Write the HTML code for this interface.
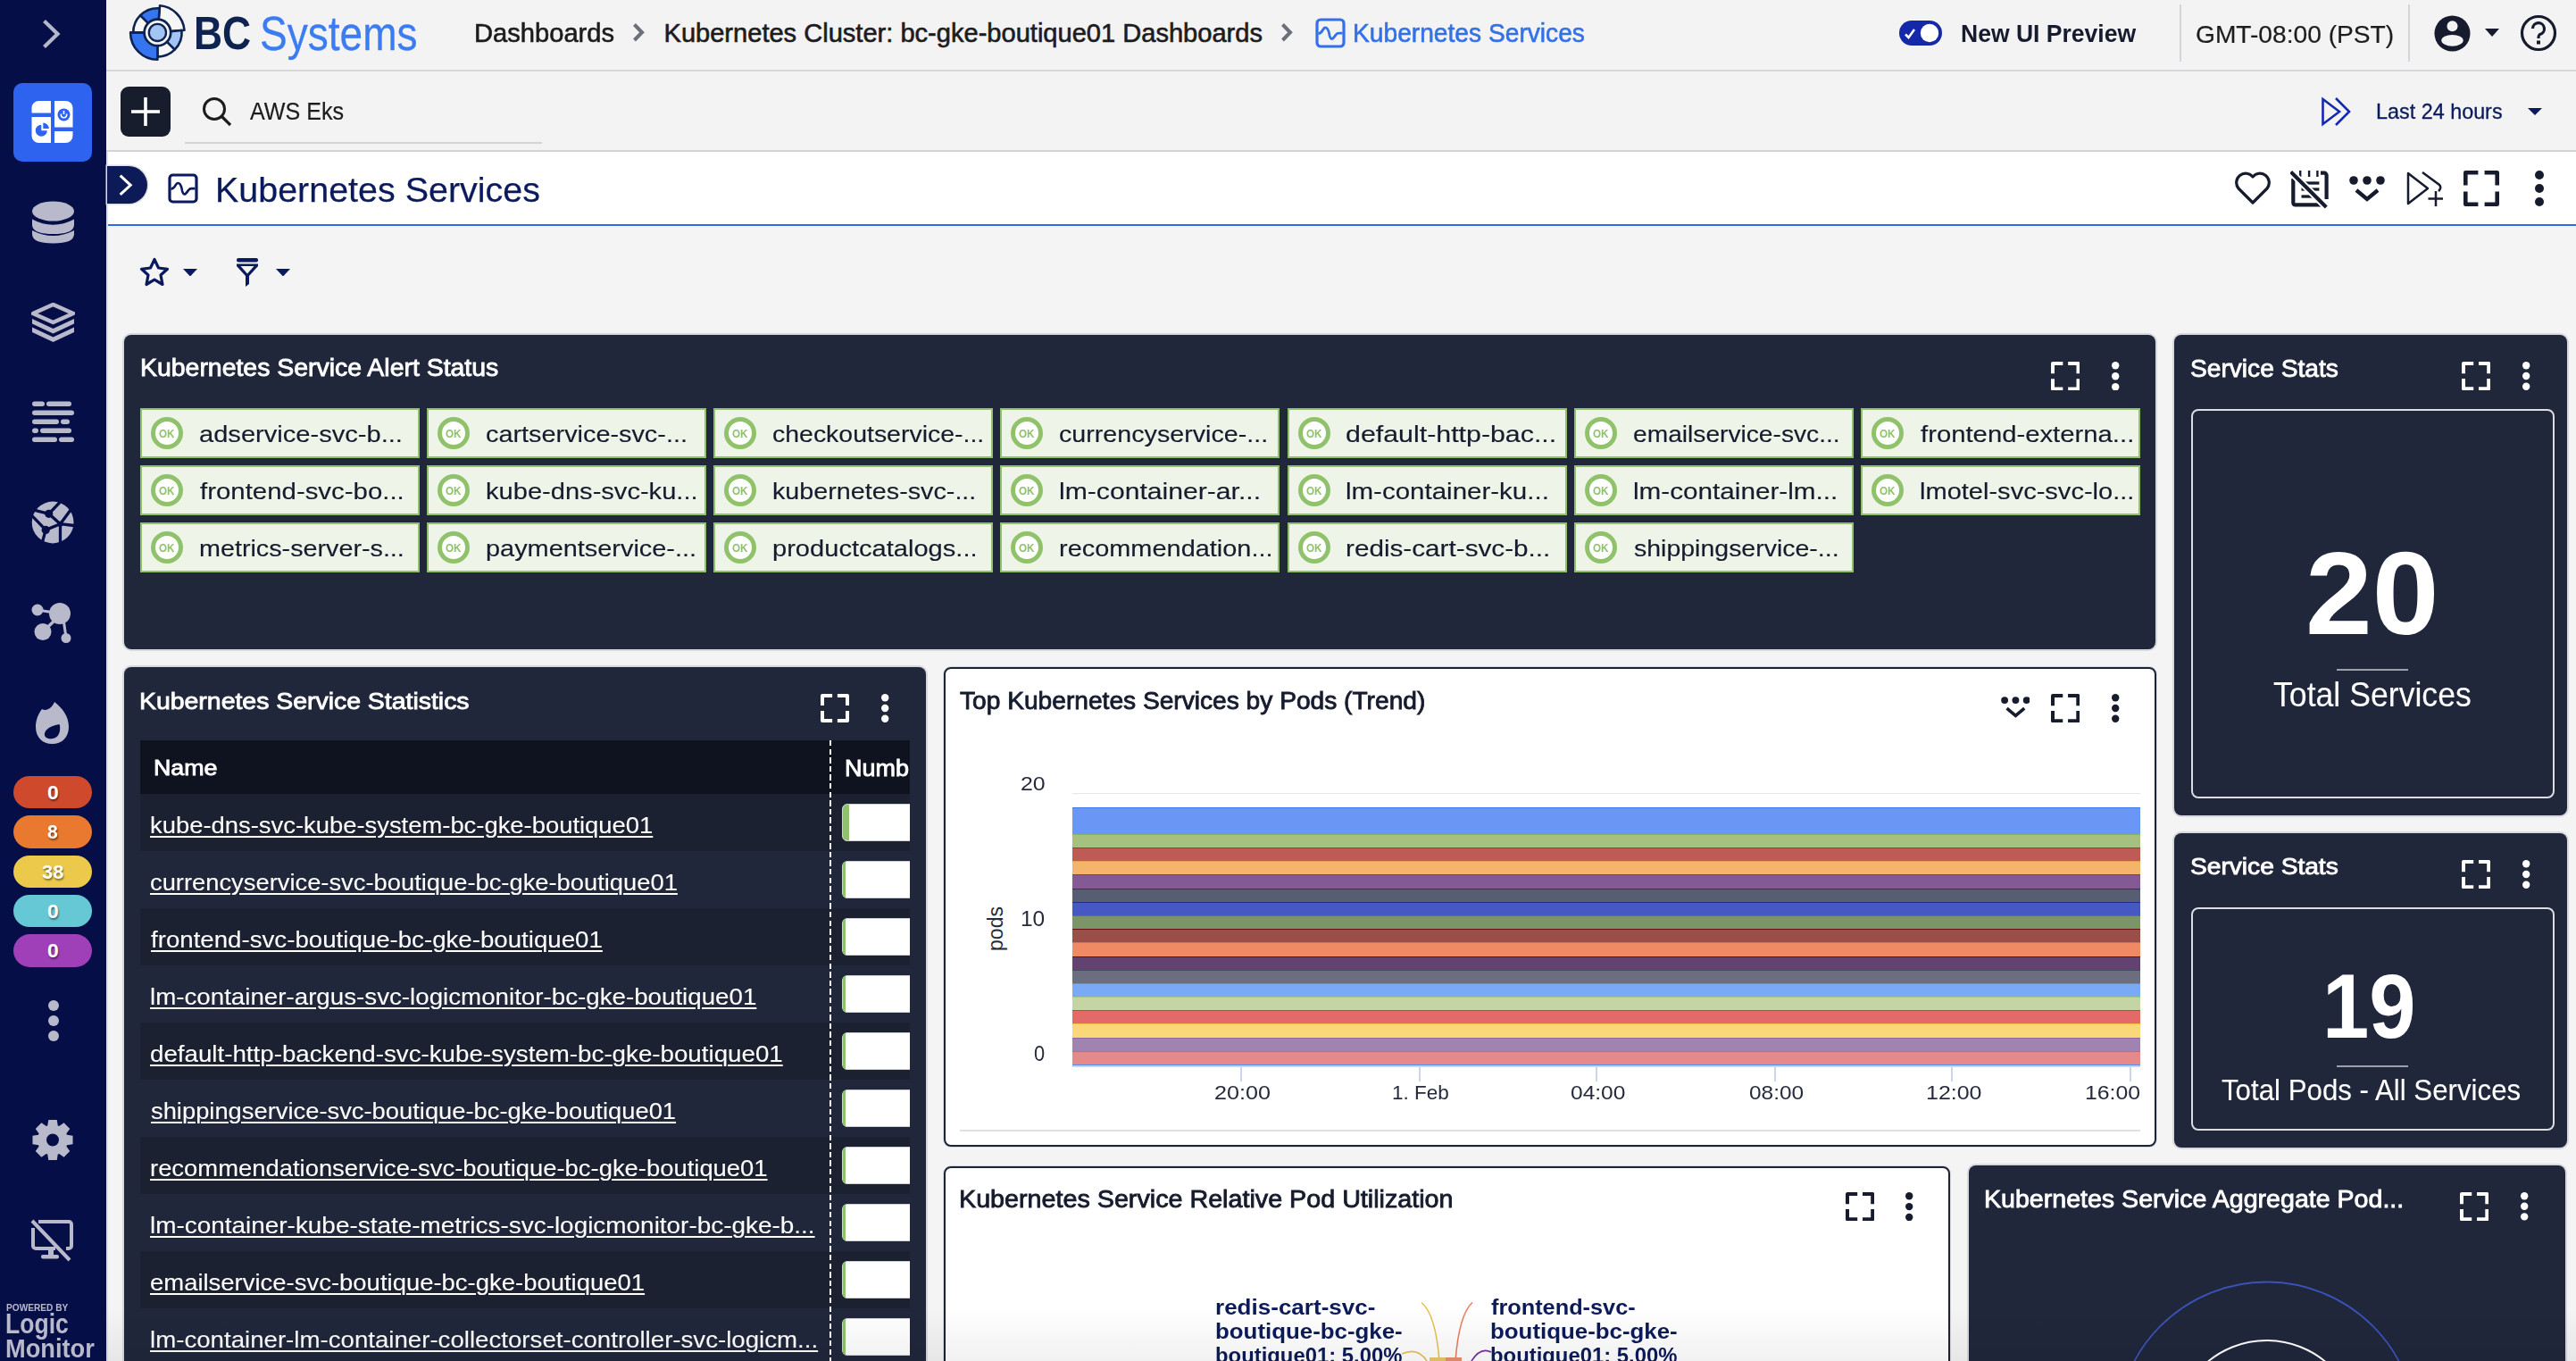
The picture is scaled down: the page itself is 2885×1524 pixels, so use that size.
<!DOCTYPE html><html><head><meta charset="utf-8"><style>
*{margin:0;padding:0;}
html,body{width:2885px;height:1524px;overflow:hidden;background:#f4f4f4;}
body{font-family:"Liberation Sans", sans-serif;position:relative;}
.b{position:absolute;display:block;}
.t{position:absolute;white-space:nowrap;line-height:1;transform-origin:0 0;}
</style></head><body><div class="b" style="left:0.00px;top:0.00px;width:119.00px;height:1524.00px;background:#060e47;"></div>
<svg class="b" style="left:0.00px;top:0.00px;" width="119" height="80" viewBox="0 0 119 80"><polyline points="49.5,23.5 64.5,38 49.5,52.5" fill="none" stroke="#b4b7c8" stroke-width="4.2"/></svg>
<div class="b" style="left:15.00px;top:93.00px;width:88.00px;height:88.00px;background:#2e63f0;border-radius:10px;"></div>
<svg class="b" style="left:35.00px;top:113.00px;" width="48" height="48" viewBox="0 0 48 48"><path d="M8.5 0 H22 V13.5 H0.5 V8 A8 8 0 0 1 8.5 0Z" fill="#fff"/><path d="M0.5 18 H22 V47 H8.5 A8 8 0 0 1 0.5 39Z" fill="#fff"/><path d="M26 0 H38.5 A8 8 0 0 1 46.5 8 V29.5 H26Z" fill="#fff"/><path d="M26 34 H46.5 V39 A8 8 0 0 1 38.5 47 H26Z" fill="#fff"/><circle cx="36.5" cy="15.5" r="7" fill="#2e63f0"/><path d="M33.5 14.5 A3.2 3.2 0 1 0 39.5 14.5" fill="none" stroke="#fff" stroke-width="1.6"/><line x1="36.5" y1="11" x2="36.5" y2="15" stroke="#fff" stroke-width="1.6"/><path d="M11.3 26.7 A6.5 6.5 0 1 0 17.8 33.2 H11.3Z" fill="#2e63f0"/><path d="M13.3 24.5 A6.5 6.5 0 0 1 19.8 31 H13.3Z" fill="#2e63f0"/></svg>
<svg class="b" style="left:35.00px;top:224.00px;" width="49" height="50" viewBox="0 0 49 50"><ellipse cx="24.5" cy="12.5" rx="23.5" ry="11" fill="#b8bacb"/><path d="M1 21.5 Q24.5 34 48 21.5 V27.5 Q48 38 24.5 38 Q1 38 1 27.5Z" fill="#b8bacb"/><path d="M1 34 Q24.5 46 48 34 V38 Q48 48.5 24.5 48.5 Q1 48.5 1 38Z" fill="#b8bacb"/></svg>
<svg class="b" style="left:35.00px;top:339.00px;" width="49" height="45" viewBox="0 0 49 45"><path d="M24.5 2 L47 12 L24.5 22 L2 12Z" fill="none" stroke="#b8bacb" stroke-width="4.5" stroke-linejoin="round"/><path d="M1 18 L24.5 29 L48 18 V23.5 L24.5 34.5 L1 23.5Z" fill="#b8bacb"/><path d="M1 27.5 L24.5 38.5 L48 27.5 V33 L24.5 44 L1 33Z" fill="#b8bacb"/></svg>
<svg class="b" style="left:35.00px;top:448.00px;" width="49" height="50" viewBox="0 0 49 50"><rect x="1" y="1.5" width="14" height="5.5" rx="2.75" fill="#b8bacb"/><rect x="17" y="1.5" width="28" height="5.5" rx="2.75" fill="#b8bacb"/><rect x="1" y="11.5" width="47" height="5.5" rx="2.75" fill="#b8bacb"/><rect x="1" y="21.5" width="30" height="5.5" rx="2.75" fill="#b8bacb"/><rect x="33" y="21.5" width="10" height="5.5" rx="2.75" fill="#b8bacb"/><rect x="1" y="31.5" width="7" height="5.5" rx="2.75" fill="#b8bacb"/><rect x="10" y="31.5" width="35" height="5.5" rx="2.75" fill="#b8bacb"/><rect x="1" y="41.5" width="28" height="5.5" rx="2.75" fill="#b8bacb"/><rect x="31" y="41.5" width="17" height="5.5" rx="2.75" fill="#b8bacb"/></svg>
<svg class="b" style="left:35.00px;top:561.00px;" width="49" height="49" viewBox="0 0 49 49"><defs><mask id="gm"><rect width="49" height="49" fill="#fff"/><path d="M19.7 14.3 L32 1.5 M19.7 14.3 L2 9.9 M19.7 14.3 L32.5 25.7 L43.9 10.3 M32.5 25.7 L47.9 27.5 M32.5 25.7 L32.5 47.5 M16.2 32.4 L32.5 25.7 M16.2 32.4 L1.2 16.9 M16.2 32.4 L12.6 45.5" fill="none" stroke="#000" stroke-width="3.3"/><circle cx="19.7" cy="14.3" r="4.6" fill="#000"/><circle cx="32.5" cy="25.7" r="3" fill="#000"/><circle cx="16.2" cy="32.4" r="4.6" fill="#000"/></mask></defs><circle cx="24.1" cy="24" r="23.4" fill="#b8bacb" mask="url(#gm)"/></svg>
<svg class="b" style="left:35.00px;top:673.00px;" width="49" height="49" viewBox="0 0 49 49"><circle cx="32" cy="14" r="12" fill="#b8bacb"/><circle cx="7" cy="10" r="6.5" fill="#b8bacb"/><circle cx="13" cy="34.5" r="9.5" fill="#b8bacb"/><circle cx="39" cy="41.5" r="5.5" fill="#b8bacb"/><line x1="7" y1="10" x2="32" y2="14" stroke="#b8bacb" stroke-width="3"/><line x1="13" y1="34.5" x2="30" y2="18" stroke="#b8bacb" stroke-width="3.5"/><line x1="36" y1="20" x2="39" y2="41" stroke="#b8bacb" stroke-width="3"/></svg>
<svg class="b" style="left:38.00px;top:785.00px;" width="42" height="50" viewBox="0 0 42 50"><path fill-rule="evenodd" fill="#b8bacb" d="M23 1 C20 8 14 12 9 9 C4 16 2 22 2 29 C2 41 10 48 20.5 48 C31 48 39 41 39 29 C39 17 32 8 23 1Z M28 26 C24 27 14 29 12 36 C11 41 16 43 21 42 C27 41 30 36 29 27Z"/></svg>
<div class="b" style="left:15.00px;top:869.00px;width:88.00px;height:36.00px;background:#cf4a2c;border-radius:19px;"></div>
<div class="t" style="left:53.00px;top:876.09px;font-size:22.923px;color:#fff;font-weight:bold;text-shadow:1px 2px 2px rgba(0,0,0,0.45);">0</div>
<div class="b" style="left:15.00px;top:913.00px;width:88.00px;height:37.00px;background:#e8792f;border-radius:19px;"></div>
<div class="t" style="left:53.00px;top:920.09px;font-size:22.923px;color:#fff;font-weight:bold;transform:scaleX(0.9231);text-shadow:1px 2px 2px rgba(0,0,0,0.45);">8</div>
<div class="b" style="left:15.00px;top:958.00px;width:88.00px;height:36.00px;background:#ecc94b;border-radius:19px;"></div>
<div class="t" style="left:46.75px;top:965.09px;font-size:22.923px;color:#fff;font-weight:bold;transform:scaleX(0.9518);text-shadow:1px 2px 2px rgba(0,0,0,0.45);">38</div>
<div class="b" style="left:15.00px;top:1002.00px;width:88.00px;height:36.00px;background:#66c8d4;border-radius:19px;"></div>
<div class="t" style="left:53.00px;top:1009.09px;font-size:22.923px;color:#fff;font-weight:bold;text-shadow:1px 2px 2px rgba(0,0,0,0.45);">0</div>
<div class="b" style="left:15.00px;top:1046.00px;width:88.00px;height:37.00px;background:#a040b8;border-radius:19px;"></div>
<div class="t" style="left:53.00px;top:1053.09px;font-size:22.923px;color:#fff;font-weight:bold;text-shadow:1px 2px 2px rgba(0,0,0,0.45);">0</div>
<svg class="b" style="left:50.00px;top:1115.00px;" width="20" height="55" viewBox="0 0 20 55"><circle cx="10" cy="11" r="6" fill="#b8bacb"/><circle cx="10" cy="28" r="6" fill="#b8bacb"/><circle cx="10" cy="45" r="6" fill="#b8bacb"/></svg>
<svg class="b" style="left:35.00px;top:1252.00px;" width="49" height="49" viewBox="0 0 49 49"><path fill-rule="evenodd" fill="#b8bacb" d="M39.99 18.74 L46.51 19.77 L46.51 29.23 L39.99 30.26 L39.38 31.74 L43.26 37.07 L36.57 43.76 L31.24 39.88 L29.76 40.49 L28.73 47.01 L19.27 47.01 L18.24 40.49 L16.76 39.88 L11.43 43.76 L4.74 37.07 L8.62 31.74 L8.01 30.26 L1.49 29.23 L1.49 19.77 L8.01 18.74 L8.62 17.26 L4.74 11.93 L11.43 5.24 L16.76 9.12 L18.24 8.51 L19.27 1.99 L28.73 1.99 L29.76 8.51 L31.24 9.12 L36.57 5.24 L43.26 11.93 L39.38 17.26Z M31.00 24.50 A7 7 0 1 0 17.00 24.50 A7 7 0 1 0 31.00 24.50 Z"/></svg>
<svg class="b" style="left:33.00px;top:1365.00px;" width="49" height="49" viewBox="0 0 49 49"><path d="M10 3 H44 A3 3 0 0 1 47 6 V30 A3 3 0 0 1 44 33 H41" fill="none" stroke="#b8bacb" stroke-width="4"/><path d="M4 10 V30 A3 3 0 0 0 7 33 H29" fill="none" stroke="#b8bacb" stroke-width="4"/><rect x="21" y="33" width="6" height="8" fill="#b8bacb"/><rect x="13" y="40" width="20" height="4.5" rx="2" fill="#b8bacb"/><line x1="3" y1="2" x2="45" y2="46" stroke="#b8bacb" stroke-width="4"/></svg>
<div class="t" style="left:7.00px;top:1459.27px;font-size:10.901px;color:#b8bacb;font-weight:bold;transform:scaleX(0.9313);">POWERED BY</div>
<div class="t" style="left:5.56px;top:1466.92px;font-size:30.451px;color:#b8bacb;font-weight:bold;transform:scaleX(0.8721);">Logic</div>
<div class="t" style="left:5.81px;top:1495.48px;font-size:30.378px;color:#b8bacb;font-weight:bold;transform:scaleX(0.8971);">Monitor</div>
<div class="b" style="left:119.00px;top:0.00px;width:2766.00px;height:80.00px;background:#f3f3f4;border-bottom:2px solid #d8d8dc;box-sizing:border-box;"></div>
<svg class="b" style="left:143.30px;top:3.30px;" width="67" height="67" viewBox="0 0 67 67"><g stroke="#0e2350" stroke-width="2.6" stroke-linejoin="round"><path d="M36.03 3.31 A30.2 30.2 0 0 1 63.49 30.77 L48.14 32.11 A14.8 14.8 0 0 0 34.69 18.66 Z" fill="#f6f6f7"/><path d="M60.50 31.03 A27.2 27.2 0 0 1 52.63 52.63 L43.87 43.87 A14.8 14.8 0 0 0 48.14 32.11 Z" fill="#a3c5f3"/><path d="M52.63 52.63 A27.2 27.2 0 0 1 33.40 60.60 L33.40 48.20 A14.8 14.8 0 0 0 43.87 43.87 Z" fill="#f6f6f7"/><path d="M33.40 63.70 A30.3 30.3 0 0 1 3.10 33.40 L18.60 33.40 A14.8 14.8 0 0 0 33.40 48.20 Z" fill="#3575f0"/><path d="M6.20 33.40 A27.2 27.2 0 0 1 14.17 14.17 L22.93 22.93 A14.8 14.8 0 0 0 18.60 33.40 Z" fill="#f6f6f7"/><path d="M14.17 14.17 A27.2 27.2 0 0 1 35.77 6.30 L34.69 18.66 A14.8 14.8 0 0 0 22.93 22.93 Z" fill="#3575f0"/></g><circle cx="33.4" cy="33.4" r="14.6" fill="#f6f6f7" stroke="#0e2350" stroke-width="2.3"/><circle cx="33.4" cy="33.4" r="9.6" fill="#a3c5f3" stroke="#0e2350" stroke-width="2.3"/></svg>
<div class="t" style="left:217.45px;top:11.20px;font-size:52.326px;color:#0e2350;font-weight:bold;transform:scaleX(0.8498);">BC</div>
<div class="t" style="left:290.76px;top:10.58px;font-size:53.052px;color:#3b7cf0;transform:scaleX(0.8681);-webkit-text-stroke:0.30px #3b7cf0;">Systems</div>
<div class="t" style="left:530.50px;top:23.39px;font-size:29.070px;color:#1c1c1e;transform:scaleX(1.0021);-webkit-text-stroke:0.60px #1c1c1e;">Dashboards</div>
<svg class="b" style="left:708.00px;top:25.00px;" width="15" height="23" viewBox="0 0 15 23"><polyline points="2.5,2.5 11,11.25 2.5,20" fill="none" stroke="#6b6f7a" stroke-width="4"/></svg>
<div class="t" style="left:743.50px;top:23.39px;font-size:29.070px;color:#1c1c1e;-webkit-text-stroke:0.60px #1c1c1e;">Kubernetes Cluster: bc-gke-boutique01 Dashboards</div>
<svg class="b" style="left:1433.50px;top:25.00px;" width="15" height="23" viewBox="0 0 15 23"><polyline points="2.5,2.5 11,11.25 2.5,20" fill="none" stroke="#6b6f7a" stroke-width="4"/></svg>
<svg class="b" style="left:1473.00px;top:20.00px;" width="34" height="34" viewBox="0 0 34 34"><rect x="2" y="2" width="30" height="30" rx="4" fill="none" stroke="#3371e8" stroke-width="3.2"/><path d="M3.5 17.6 Q6.5 17.5 8.5 13.5 Q11 9 13.8 12.5 Q15.5 15 16 19.5 Q17 24.5 19.8 23 Q21.5 21.5 23 19 Q24.5 17.1 26.5 17.1 H30.5" fill="none" stroke="#3371e8" stroke-width="2.8"/></svg>
<div class="t" style="left:1515.06px;top:23.39px;font-size:29.070px;color:#3371e8;transform:scaleX(0.9694);-webkit-text-stroke:0.60px #3371e8;">Kubernetes Services</div>
<div class="b" style="left:2127.00px;top:23.00px;width:48.00px;height:28.00px;background:#1428a8;border-radius:14px;"></div>
<svg class="b" style="left:2127.00px;top:23.00px;" width="48" height="28" viewBox="0 0 48 28"><circle cx="34" cy="14" r="10.2" fill="#fff"/><polyline points="7,15.5 10.5,19 17,10" fill="none" stroke="#fff" stroke-width="2.5"/></svg>
<div class="t" style="left:2195.55px;top:24.33px;font-size:27.834px;color:#161b2e;font-weight:bold;transform:scaleX(0.9534);">New UI Preview</div>
<div class="b" style="left:2441.00px;top:5.00px;width:2.00px;height:64.00px;background:#d4d4da;"></div>
<div class="t" style="left:2458.97px;top:24.66px;font-size:27.326px;color:#1c1c1e;transform:scaleX(1.0308);-webkit-text-stroke:0.20px #1c1c1e;">GMT-08:00 (PST)</div>
<div class="b" style="left:2697.00px;top:5.00px;width:2.00px;height:64.00px;background:#d4d4da;"></div>
<svg class="b" style="left:2726.00px;top:17.00px;" width="41" height="41" viewBox="0 0 41 41"><defs><clipPath id="uc"><circle cx="20.5" cy="20.5" r="20"/></clipPath></defs><circle cx="20.5" cy="20.5" r="20" fill="#161b2e"/><circle cx="20.5" cy="12.2" r="6" fill="#f3f3f4"/><ellipse cx="20.5" cy="28.3" rx="12.2" ry="6.4" fill="#f3f3f4"/></svg>
<svg class="b" style="left:2783.00px;top:32.00px;" width="16" height="9" viewBox="0 0 16 9"><polygon points="0,0 16,0 8,9" fill="#161b2e"/></svg>
<svg class="b" style="left:2822.00px;top:16.00px;" width="42" height="42" viewBox="0 0 42 42"><circle cx="21" cy="21" r="18.5" fill="none" stroke="#161b2e" stroke-width="3.2"/><path d="M14.5 16 A6.5 6.5 0 1 1 22.5 22.5 Q21 23.5 21 26 V27" fill="none" stroke="#161b2e" stroke-width="3.2"/><rect x="19" y="29.5" width="4" height="4" fill="#161b2e"/></svg>
<div class="b" style="left:119.00px;top:80.00px;width:2766.00px;height:90.00px;background:#f3f3f4;border-bottom:2px solid #d4d4d8;box-sizing:border-box;"></div>
<div class="b" style="left:135.00px;top:97.00px;width:56.00px;height:56.00px;background:#181d2d;border-radius:9px;"></div>
<svg class="b" style="left:135.00px;top:97.00px;" width="56" height="56" viewBox="0 0 56 56"><line x1="12" y1="28" x2="44" y2="28" stroke="#fff" stroke-width="3.6"/><line x1="28" y1="12" x2="28" y2="44" stroke="#fff" stroke-width="3.6"/></svg>
<svg class="b" style="left:226.00px;top:108.00px;" width="34" height="34" viewBox="0 0 34 34"><circle cx="14" cy="14" r="11.5" fill="none" stroke="#1c1c1e" stroke-width="3"/><line x1="22.5" y1="22.5" x2="32" y2="32" stroke="#1c1c1e" stroke-width="3.2"/></svg>
<div class="t" style="left:279.50px;top:110.67px;font-size:27.253px;color:#1c1c1e;transform:scaleX(0.9213);-webkit-text-stroke:0.20px #1c1c1e;">AWS Eks</div>
<div class="b" style="left:207.00px;top:159.00px;width:400.00px;height:2.00px;background:#d2d2da;"></div>
<svg class="b" style="left:2599.00px;top:108.00px;" width="35" height="34" viewBox="0 0 35 34"><polygon points="2.5,3 21,17 2.5,31" fill="none" stroke="#1428b0" stroke-width="2.6" stroke-linejoin="miter"/><polyline points="17,2 32,17 17,32" fill="none" stroke="#1428b0" stroke-width="2.6"/></svg>
<div class="t" style="left:2660.54px;top:113.45px;font-size:24.273px;color:#0b1a5c;transform:scaleX(0.9629);-webkit-text-stroke:0.30px #0b1a5c;">Last 24 hours</div>
<svg class="b" style="left:2831.00px;top:121.00px;" width="16" height="8" viewBox="0 0 16 8"><polygon points="0,0 16,0 8,8" fill="#0b1a5c"/></svg>
<div class="b" style="left:119.00px;top:170.00px;width:2766.00px;height:83.00px;background:#fff;border-bottom:2.5px solid #2e6be6;box-sizing:border-box;"></div>
<div class="b" style="left:119.00px;top:170.00px;width:2.00px;height:1354.00px;background:#dde0e4;"></div>
<div class="b" style="left:120.00px;top:185.80px;width:44.50px;height:42.00px;background:#0c1a57;border-radius:0 21px 21px 0;box-shadow:0 0 0 1.5px #dcdde2;"></div>
<svg class="b" style="left:119.00px;top:185.00px;" width="46" height="43" viewBox="0 0 46 43"><polyline points="15.7,11.7 27.2,22.3 15.7,32.9" fill="none" stroke="#fff" stroke-width="3"/></svg>
<svg class="b" style="left:188.00px;top:194.00px;" width="34" height="34" viewBox="0 0 34 34"><rect x="2" y="2" width="30" height="30" rx="3.5" fill="none" stroke="#0b1a5c" stroke-width="3.2"/><path d="M3.5 17.6 Q6.5 17.5 8.5 13.5 Q11 9 13.8 12.5 Q15.5 15 16 19.5 Q17 24.5 19.8 23 Q21.5 21.5 23 19 Q24.5 17.1 26.5 17.1 H30.5" fill="none" stroke="#0b1a5c" stroke-width="2.6"/></svg>
<div class="t" style="left:240.73px;top:192.52px;font-size:39.244px;color:#0b1a5c;transform:scaleX(1.0052);-webkit-text-stroke:0.25px #0b1a5c;">Kubernetes Services</div>
<svg class="b" style="left:2502.00px;top:192.00px;" width="42" height="38" viewBox="0 0 42 38"><path d="M21 35 L5 19 A9.5 9.5 0 0 1 21 6 A9.5 9.5 0 0 1 37 19Z" fill="none" stroke="#161b2e" stroke-width="3.2" stroke-linejoin="round"/></svg>
<svg class="b" style="left:2565.00px;top:190.00px;" width="44" height="44" viewBox="0 0 44 44"><path d="M3.3 10 V37 A2.5 2.5 0 0 0 5.8 39.4 H36" fill="none" stroke="#161b2e" stroke-width="4.2"/><path d="M34 3.7 H38 A2.5 2.5 0 0 1 40.6 6.2 V33" fill="none" stroke="#161b2e" stroke-width="4.2"/><line x1="12.5" y1="15" x2="32.4" y2="15" stroke="#161b2e" stroke-width="3.3"/><line x1="12.5" y1="22" x2="32.4" y2="22" stroke="#161b2e" stroke-width="3.3"/><line x1="12.5" y1="30" x2="28" y2="30" stroke="#161b2e" stroke-width="3.3"/><line x1="11.2" y1="1" x2="11.2" y2="8" stroke="#161b2e" stroke-width="2.4"/><line x1="21.1" y1="1" x2="21.1" y2="8" stroke="#161b2e" stroke-width="2.4"/><line x1="30.4" y1="1" x2="30.4" y2="8" stroke="#161b2e" stroke-width="2.4"/><line x1="0.6" y1="2.4" x2="40.3" y2="42" stroke="#fff" stroke-width="8"/><line x1="0.6" y1="2.4" x2="40.3" y2="42" stroke="#161b2e" stroke-width="4.2"/></svg>
<svg class="b" style="left:2631.00px;top:197.00px;" width="40" height="30" viewBox="0 0 40 30"><g transform="scale(1)"><circle cx="5" cy="5" r="4.8" fill="#161b2e"/><circle cx="20" cy="5" r="4.8" fill="#161b2e"/><circle cx="35" cy="5" r="4.8" fill="#161b2e"/><polyline points="8,16 20,26 32,16" fill="none" stroke="#161b2e" stroke-width="4.4"/></g></svg>
<svg class="b" style="left:2694.00px;top:191.00px;" width="42" height="41" viewBox="0 0 42 41"><polygon points="3,3 25,20 3,37" fill="none" stroke="#161b2e" stroke-width="2.5" stroke-linejoin="round"/><path d="M19 2 L38 16 Q41 19 37 23" fill="none" stroke="#161b2e" stroke-width="2.5"/><line x1="34" y1="23" x2="34" y2="40" stroke="#161b2e" stroke-width="2.5"/><line x1="25.5" y1="31.5" x2="42" y2="31.5" stroke="#161b2e" stroke-width="2.5"/></svg>
<svg class="b" style="left:2759.00px;top:191.00px;" width="40" height="40" viewBox="0 0 40 40"><path d="M2.3 16.4 V2.3 H16.4 M23.6 2.3 H37.7 V16.4 M2.3 23.6 V37.7 H16.4 M23.6 37.7 H37.7 V23.6" fill="none" stroke="#161b2e" stroke-width="4.6" stroke-linejoin="round"/></svg>
<svg class="b" style="left:2838.00px;top:191.00px;" width="12" height="40" viewBox="0 0 12 40"><circle cx="6" cy="5" r="5" fill="#161b2e"/><circle cx="6" cy="20" r="5" fill="#161b2e"/><circle cx="6" cy="35" r="5" fill="#161b2e"/></svg>
<div class="b" style="left:121.00px;top:253.00px;width:2764.00px;height:1271.00px;background:#f4f4f4;"></div>
<svg class="b" style="left:156.00px;top:288.00px;" width="34" height="34" viewBox="0 0 34 34"><polygon points="17,2.5 21.5,12 31.5,13.3 24,20 26,30.5 17,25.2 8,30.5 10,20 2.5,13.3 12.5,12" fill="none" stroke="#0b1a5c" stroke-width="3.2" stroke-linejoin="round"/></svg>
<svg class="b" style="left:205.00px;top:300.50px;" width="16" height="8.5" viewBox="0 0 16 8.5"><polygon points="0,0 16,0 8,8.5" fill="#0b1a5c"/></svg>
<svg class="b" style="left:264.00px;top:288.00px;" width="26" height="34" viewBox="0 0 26 34"><rect x="1" y="1" width="24" height="4.5" rx="2" fill="#0b1a5c"/><path d="M1 7.5 H25 V10 L15 21 V30 L11 33 V21 L1 10Z" fill="#0b1a5c"/><path d="M5.5 10 H20.5 L13 18.5Z" fill="#f4f4f4"/></svg>
<svg class="b" style="left:309.00px;top:300.50px;" width="16" height="8.5" viewBox="0 0 16 8.5"><polygon points="0,0 16,0 8,8.5" fill="#0b1a5c"/></svg>
<div class="b" style="left:139.00px;top:375.00px;width:2275.00px;height:352.00px;background:#20273b;border-radius:8px;box-shadow:0 0 0 2px #d6d8dd;"></div>
<div class="t" style="left:156.64px;top:399.20px;font-size:26.926px;color:#fff;transform:scaleX(1.0563);-webkit-text-stroke:0.85px #fff;">Kubernetes Service Alert Status</div>
<svg class="b" style="left:2296.50px;top:404.50px;" width="32.5" height="32.5" viewBox="0 0 32.5 32.5"><path d="M2 13.325 V2 H13.325 M19.175 2 H30.5 V13.325 M2 19.175 V30.5 H13.325 M19.175 30.5 H30.5 V19.175" fill="none" stroke="#fff" stroke-width="4" stroke-linejoin="round"/></svg>
<svg class="b" style="left:2363.80px;top:404.50px;" width="10.4" height="32.5" viewBox="0 0 10.4 32.5"><circle cx="5.2" cy="4.2" r="4.2" fill="#fff"/><circle cx="5.2" cy="16.25" r="4.2" fill="#fff"/><circle cx="5.2" cy="28.3" r="4.2" fill="#fff"/></svg>
<div class="b" style="left:157.00px;top:457.00px;width:313.00px;height:56.00px;background:#eef4e8;border:2px solid #90c26c;box-sizing:border-box;"></div>
<svg class="b" style="left:169.00px;top:467.00px;" width="36" height="36" viewBox="0 0 36 36"><circle cx="18" cy="18" r="15.5" fill="#fff" stroke="#90c26c" stroke-width="5"/></svg>
<div class="t" style="left:178.00px;top:478.92px;font-size:13.081px;color:#90c26c;font-weight:bold;transform:scaleX(0.8923);">OK</div>
<div class="t" style="left:222.87px;top:473.64px;font-size:25.821px;color:#161c2e;transform:scaleX(1.1267);-webkit-text-stroke:0.15px #161c2e;">adservice-svc-b...</div>
<div class="b" style="left:478.13px;top:457.00px;width:313.00px;height:56.00px;background:#eef4e8;border:2px solid #90c26c;box-sizing:border-box;"></div>
<svg class="b" style="left:490.13px;top:467.00px;" width="36" height="36" viewBox="0 0 36 36"><circle cx="18" cy="18" r="15.5" fill="#fff" stroke="#90c26c" stroke-width="5"/></svg>
<div class="t" style="left:499.13px;top:478.92px;font-size:13.081px;color:#90c26c;font-weight:bold;transform:scaleX(0.8923);">OK</div>
<div class="t" style="left:544.01px;top:473.64px;font-size:25.821px;color:#161c2e;transform:scaleX(1.1173);-webkit-text-stroke:0.15px #161c2e;">cartservice-svc-...</div>
<div class="b" style="left:799.26px;top:457.00px;width:313.00px;height:56.00px;background:#eef4e8;border:2px solid #90c26c;box-sizing:border-box;"></div>
<svg class="b" style="left:811.26px;top:467.00px;" width="36" height="36" viewBox="0 0 36 36"><circle cx="18" cy="18" r="15.5" fill="#fff" stroke="#90c26c" stroke-width="5"/></svg>
<div class="t" style="left:820.26px;top:478.92px;font-size:13.081px;color:#90c26c;font-weight:bold;transform:scaleX(0.8923);">OK</div>
<div class="t" style="left:865.16px;top:473.64px;font-size:25.821px;color:#161c2e;transform:scaleX(1.1023);-webkit-text-stroke:0.15px #161c2e;">checkoutservice-...</div>
<div class="b" style="left:1120.39px;top:457.00px;width:313.00px;height:56.00px;background:#eef4e8;border:2px solid #90c26c;box-sizing:border-box;"></div>
<svg class="b" style="left:1132.39px;top:467.00px;" width="36" height="36" viewBox="0 0 36 36"><circle cx="18" cy="18" r="15.5" fill="#fff" stroke="#90c26c" stroke-width="5"/></svg>
<div class="t" style="left:1141.39px;top:478.92px;font-size:13.081px;color:#90c26c;font-weight:bold;transform:scaleX(0.8923);">OK</div>
<div class="t" style="left:1186.28px;top:473.64px;font-size:25.821px;color:#161c2e;transform:scaleX(1.1104);-webkit-text-stroke:0.15px #161c2e;">currencyservice-...</div>
<div class="b" style="left:1441.52px;top:457.00px;width:313.00px;height:56.00px;background:#eef4e8;border:2px solid #90c26c;box-sizing:border-box;"></div>
<svg class="b" style="left:1453.52px;top:467.00px;" width="36" height="36" viewBox="0 0 36 36"><circle cx="18" cy="18" r="15.5" fill="#fff" stroke="#90c26c" stroke-width="5"/></svg>
<div class="t" style="left:1462.52px;top:478.92px;font-size:13.081px;color:#90c26c;font-weight:bold;transform:scaleX(0.8923);">OK</div>
<div class="t" style="left:1507.34px;top:473.64px;font-size:25.821px;color:#161c2e;transform:scaleX(1.1760);-webkit-text-stroke:0.15px #161c2e;">default-http-bac...</div>
<div class="b" style="left:1762.65px;top:457.00px;width:313.00px;height:56.00px;background:#eef4e8;border:2px solid #90c26c;box-sizing:border-box;"></div>
<svg class="b" style="left:1774.65px;top:467.00px;" width="36" height="36" viewBox="0 0 36 36"><circle cx="18" cy="18" r="15.5" fill="#fff" stroke="#90c26c" stroke-width="5"/></svg>
<div class="t" style="left:1783.65px;top:478.92px;font-size:13.081px;color:#90c26c;font-weight:bold;transform:scaleX(0.8923);">OK</div>
<div class="t" style="left:1828.56px;top:473.64px;font-size:25.821px;color:#161c2e;transform:scaleX(1.0913);-webkit-text-stroke:0.15px #161c2e;">emailservice-svc...</div>
<div class="b" style="left:2083.78px;top:457.00px;width:313.00px;height:56.00px;background:#eef4e8;border:2px solid #90c26c;box-sizing:border-box;"></div>
<svg class="b" style="left:2095.78px;top:467.00px;" width="36" height="36" viewBox="0 0 36 36"><circle cx="18" cy="18" r="15.5" fill="#fff" stroke="#90c26c" stroke-width="5"/></svg>
<div class="t" style="left:2104.78px;top:478.92px;font-size:13.081px;color:#90c26c;font-weight:bold;transform:scaleX(0.8923);">OK</div>
<div class="t" style="left:2150.78px;top:473.64px;font-size:25.821px;color:#161c2e;transform:scaleX(1.1344);-webkit-text-stroke:0.15px #161c2e;">frontend-externa...</div>
<div class="b" style="left:157.00px;top:521.00px;width:313.00px;height:56.00px;background:#eef4e8;border:2px solid #90c26c;box-sizing:border-box;"></div>
<svg class="b" style="left:169.00px;top:531.00px;" width="36" height="36" viewBox="0 0 36 36"><circle cx="18" cy="18" r="15.5" fill="#fff" stroke="#90c26c" stroke-width="5"/></svg>
<div class="t" style="left:178.00px;top:542.92px;font-size:13.081px;color:#90c26c;font-weight:bold;transform:scaleX(0.8923);">OK</div>
<div class="t" style="left:224.00px;top:537.64px;font-size:25.821px;color:#161c2e;transform:scaleX(1.1390);-webkit-text-stroke:0.15px #161c2e;">frontend-svc-bo...</div>
<div class="b" style="left:478.13px;top:521.00px;width:313.00px;height:56.00px;background:#eef4e8;border:2px solid #90c26c;box-sizing:border-box;"></div>
<svg class="b" style="left:490.13px;top:531.00px;" width="36" height="36" viewBox="0 0 36 36"><circle cx="18" cy="18" r="15.5" fill="#fff" stroke="#90c26c" stroke-width="5"/></svg>
<div class="t" style="left:499.13px;top:542.92px;font-size:13.081px;color:#90c26c;font-weight:bold;transform:scaleX(0.8923);">OK</div>
<div class="t" style="left:544.00px;top:537.64px;font-size:25.821px;color:#161c2e;transform:scaleX(1.1266);-webkit-text-stroke:0.15px #161c2e;">kube-dns-svc-ku...</div>
<div class="b" style="left:799.26px;top:521.00px;width:313.00px;height:56.00px;background:#eef4e8;border:2px solid #90c26c;box-sizing:border-box;"></div>
<svg class="b" style="left:811.26px;top:531.00px;" width="36" height="36" viewBox="0 0 36 36"><circle cx="18" cy="18" r="15.5" fill="#fff" stroke="#90c26c" stroke-width="5"/></svg>
<div class="t" style="left:820.26px;top:542.92px;font-size:13.081px;color:#90c26c;font-weight:bold;transform:scaleX(0.8923);">OK</div>
<div class="t" style="left:865.15px;top:537.64px;font-size:25.821px;color:#161c2e;transform:scaleX(1.1131);-webkit-text-stroke:0.15px #161c2e;">kubernetes-svc-...</div>
<div class="b" style="left:1120.39px;top:521.00px;width:313.00px;height:56.00px;background:#eef4e8;border:2px solid #90c26c;box-sizing:border-box;"></div>
<svg class="b" style="left:1132.39px;top:531.00px;" width="36" height="36" viewBox="0 0 36 36"><circle cx="18" cy="18" r="15.5" fill="#fff" stroke="#90c26c" stroke-width="5"/></svg>
<div class="t" style="left:1141.39px;top:542.92px;font-size:13.081px;color:#90c26c;font-weight:bold;transform:scaleX(0.8923);">OK</div>
<div class="t" style="left:1186.22px;top:537.64px;font-size:25.821px;color:#161c2e;transform:scaleX(1.1675);-webkit-text-stroke:0.15px #161c2e;">lm-container-ar...</div>
<div class="b" style="left:1441.52px;top:521.00px;width:313.00px;height:56.00px;background:#eef4e8;border:2px solid #90c26c;box-sizing:border-box;"></div>
<svg class="b" style="left:1453.52px;top:531.00px;" width="36" height="36" viewBox="0 0 36 36"><circle cx="18" cy="18" r="15.5" fill="#fff" stroke="#90c26c" stroke-width="5"/></svg>
<div class="t" style="left:1462.52px;top:542.92px;font-size:13.081px;color:#90c26c;font-weight:bold;transform:scaleX(0.8923);">OK</div>
<div class="t" style="left:1507.38px;top:537.64px;font-size:25.821px;color:#161c2e;transform:scaleX(1.1426);-webkit-text-stroke:0.15px #161c2e;">lm-container-ku...</div>
<div class="b" style="left:1762.65px;top:521.00px;width:313.00px;height:56.00px;background:#eef4e8;border:2px solid #90c26c;box-sizing:border-box;"></div>
<svg class="b" style="left:1774.65px;top:531.00px;" width="36" height="36" viewBox="0 0 36 36"><circle cx="18" cy="18" r="15.5" fill="#fff" stroke="#90c26c" stroke-width="5"/></svg>
<div class="t" style="left:1783.65px;top:542.92px;font-size:13.081px;color:#90c26c;font-weight:bold;transform:scaleX(0.8923);">OK</div>
<div class="t" style="left:1828.50px;top:537.64px;font-size:25.821px;color:#161c2e;transform:scaleX(1.1499);-webkit-text-stroke:0.15px #161c2e;">lm-container-lm...</div>
<div class="b" style="left:2083.78px;top:521.00px;width:313.00px;height:56.00px;background:#eef4e8;border:2px solid #90c26c;box-sizing:border-box;"></div>
<svg class="b" style="left:2095.78px;top:531.00px;" width="36" height="36" viewBox="0 0 36 36"><circle cx="18" cy="18" r="15.5" fill="#fff" stroke="#90c26c" stroke-width="5"/></svg>
<div class="t" style="left:2104.78px;top:542.92px;font-size:13.081px;color:#90c26c;font-weight:bold;transform:scaleX(0.8923);">OK</div>
<div class="t" style="left:2149.66px;top:537.64px;font-size:25.821px;color:#161c2e;transform:scaleX(1.1249);-webkit-text-stroke:0.15px #161c2e;">lmotel-svc-svc-lo...</div>
<div class="b" style="left:157.00px;top:585.00px;width:313.00px;height:56.00px;background:#eef4e8;border:2px solid #90c26c;box-sizing:border-box;"></div>
<svg class="b" style="left:169.00px;top:595.00px;" width="36" height="36" viewBox="0 0 36 36"><circle cx="18" cy="18" r="15.5" fill="#fff" stroke="#90c26c" stroke-width="5"/></svg>
<div class="t" style="left:178.00px;top:606.92px;font-size:13.081px;color:#90c26c;font-weight:bold;transform:scaleX(0.8923);">OK</div>
<div class="t" style="left:222.89px;top:601.64px;font-size:25.821px;color:#161c2e;transform:scaleX(1.1130);-webkit-text-stroke:0.15px #161c2e;">metrics-server-s...</div>
<div class="b" style="left:478.13px;top:585.00px;width:313.00px;height:56.00px;background:#eef4e8;border:2px solid #90c26c;box-sizing:border-box;"></div>
<svg class="b" style="left:490.13px;top:595.00px;" width="36" height="36" viewBox="0 0 36 36"><circle cx="18" cy="18" r="15.5" fill="#fff" stroke="#90c26c" stroke-width="5"/></svg>
<div class="t" style="left:499.13px;top:606.92px;font-size:13.081px;color:#90c26c;font-weight:bold;transform:scaleX(0.8923);">OK</div>
<div class="t" style="left:544.01px;top:601.64px;font-size:25.821px;color:#161c2e;transform:scaleX(1.1194);-webkit-text-stroke:0.15px #161c2e;">paymentservice-...</div>
<div class="b" style="left:799.26px;top:585.00px;width:313.00px;height:56.00px;background:#eef4e8;border:2px solid #90c26c;box-sizing:border-box;"></div>
<svg class="b" style="left:811.26px;top:595.00px;" width="36" height="36" viewBox="0 0 36 36"><circle cx="18" cy="18" r="15.5" fill="#fff" stroke="#90c26c" stroke-width="5"/></svg>
<div class="t" style="left:820.26px;top:606.92px;font-size:13.081px;color:#90c26c;font-weight:bold;transform:scaleX(0.8923);">OK</div>
<div class="t" style="left:865.13px;top:601.64px;font-size:25.821px;color:#161c2e;transform:scaleX(1.1267);-webkit-text-stroke:0.15px #161c2e;">productcatalogs...</div>
<div class="b" style="left:1120.39px;top:585.00px;width:313.00px;height:56.00px;background:#eef4e8;border:2px solid #90c26c;box-sizing:border-box;"></div>
<svg class="b" style="left:1132.39px;top:595.00px;" width="36" height="36" viewBox="0 0 36 36"><circle cx="18" cy="18" r="15.5" fill="#fff" stroke="#90c26c" stroke-width="5"/></svg>
<div class="t" style="left:1141.39px;top:606.92px;font-size:13.081px;color:#90c26c;font-weight:bold;transform:scaleX(0.8923);">OK</div>
<div class="t" style="left:1186.27px;top:601.64px;font-size:25.821px;color:#161c2e;transform:scaleX(1.1206);-webkit-text-stroke:0.15px #161c2e;">recommendation...</div>
<div class="b" style="left:1441.52px;top:585.00px;width:313.00px;height:56.00px;background:#eef4e8;border:2px solid #90c26c;box-sizing:border-box;"></div>
<svg class="b" style="left:1453.52px;top:595.00px;" width="36" height="36" viewBox="0 0 36 36"><circle cx="18" cy="18" r="15.5" fill="#fff" stroke="#90c26c" stroke-width="5"/></svg>
<div class="t" style="left:1462.52px;top:606.92px;font-size:13.081px;color:#90c26c;font-weight:bold;transform:scaleX(0.8923);">OK</div>
<div class="t" style="left:1507.37px;top:601.64px;font-size:25.821px;color:#161c2e;transform:scaleX(1.1505);-webkit-text-stroke:0.15px #161c2e;">redis-cart-svc-b...</div>
<div class="b" style="left:1762.65px;top:585.00px;width:313.00px;height:56.00px;background:#eef4e8;border:2px solid #90c26c;box-sizing:border-box;"></div>
<svg class="b" style="left:1774.65px;top:595.00px;" width="36" height="36" viewBox="0 0 36 36"><circle cx="18" cy="18" r="15.5" fill="#fff" stroke="#90c26c" stroke-width="5"/></svg>
<div class="t" style="left:1783.65px;top:606.92px;font-size:13.081px;color:#90c26c;font-weight:bold;transform:scaleX(0.8923);">OK</div>
<div class="t" style="left:1829.65px;top:601.64px;font-size:25.821px;color:#161c2e;transform:scaleX(1.1037);-webkit-text-stroke:0.15px #161c2e;">shippingservice-...</div>
<div class="b" style="left:2435.00px;top:374.50px;width:440.00px;height:538.50px;background:#20273b;border-radius:8px;box-shadow:0 0 0 2px #d6d8dd;"></div>
<div class="t" style="left:2452.98px;top:399.03px;font-size:27.478px;color:#fff;transform:scaleX(1.0244);-webkit-text-stroke:0.85px #fff;">Service Stats</div>
<svg class="b" style="left:2756.60px;top:405.00px;" width="32.2" height="32.2" viewBox="0 0 32.2 32.2"><path d="M2 13.202 V2 H13.202 M18.998 2 H30.2 V13.202 M2 18.998 V30.2 H13.202 M18.998 30.2 H30.2 V18.998" fill="none" stroke="#fff" stroke-width="4" stroke-linejoin="round"/></svg>
<svg class="b" style="left:2823.60px;top:405.00px;" width="10.4" height="32" viewBox="0 0 10.4 32"><circle cx="5.2" cy="4.2" r="4.2" fill="#fff"/><circle cx="5.2" cy="16" r="4.2" fill="#fff"/><circle cx="5.2" cy="27.8" r="4.2" fill="#fff"/></svg>
<div class="b" style="left:2453.50px;top:457.50px;width:407.00px;height:436.50px;border:2px solid #dcdde2;border-radius:8px;box-sizing:border-box;"></div>
<div class="t" style="left:2581.91px;top:598.76px;font-size:131.375px;color:#fff;font-weight:bold;transform:scaleX(1.0237);">20</div>
<div class="b" style="left:2617.00px;top:749.00px;width:80.00px;height:2.00px;background:#9ba0aa;"></div>
<div class="t" style="left:2546.40px;top:758.86px;font-size:38.663px;color:#fff;transform:scaleX(0.9219);-webkit-text-stroke:0.10px #fff;">Total Services</div>
<div class="b" style="left:2435.00px;top:932.60px;width:440.00px;height:352.40px;background:#20273b;border-radius:8px;box-shadow:0 0 0 2px #d6d8dd;"></div>
<div class="t" style="left:2452.88px;top:958.22px;font-size:25.131px;color:#fff;transform:scaleX(1.1198);-webkit-text-stroke:0.85px #fff;">Service Stats</div>
<svg class="b" style="left:2756.60px;top:963.30px;" width="32.2" height="32.2" viewBox="0 0 32.2 32.2"><path d="M2 13.202 V2 H13.202 M18.998 2 H30.2 V13.202 M2 18.998 V30.2 H13.202 M18.998 30.2 H30.2 V18.998" fill="none" stroke="#fff" stroke-width="4" stroke-linejoin="round"/></svg>
<svg class="b" style="left:2823.60px;top:963.30px;" width="10.4" height="32" viewBox="0 0 10.4 32"><circle cx="5.2" cy="4.2" r="4.2" fill="#fff"/><circle cx="5.2" cy="16" r="4.2" fill="#fff"/><circle cx="5.2" cy="27.8" r="4.2" fill="#fff"/></svg>
<div class="b" style="left:2453.50px;top:1015.80px;width:407.00px;height:250.50px;border:2px solid #dcdde2;border-radius:8px;box-sizing:border-box;"></div>
<div class="t" style="left:2601.49px;top:1075.79px;font-size:102.292px;color:#fff;font-weight:bold;transform:scaleX(0.9191);">19</div>
<div class="b" style="left:2617.00px;top:1193.00px;width:80.00px;height:2.00px;background:#9ba0aa;"></div>
<div class="t" style="left:2488.40px;top:1205.23px;font-size:32.558px;color:#fff;transform:scaleX(0.9600);-webkit-text-stroke:0.10px #fff;">Total Pods - All Services</div>
<div class="b" style="left:139.00px;top:747.00px;width:898.00px;height:853.00px;background:#20273b;border-radius:8px;box-shadow:0 0 0 2px #d6d8dd;"></div>
<div class="t" style="left:156.47px;top:771.74px;font-size:26.650px;color:#fff;transform:scaleX(1.0666);-webkit-text-stroke:0.85px #fff;">Kubernetes Service Statistics</div>
<svg class="b" style="left:919.00px;top:777.00px;" width="32" height="32" viewBox="0 0 32 32"><path d="M2 13.12 V2 H13.12 M18.88 2 H30 V13.12 M2 18.88 V30 H13.12 M18.88 30 H30 V18.88" fill="none" stroke="#fff" stroke-width="4" stroke-linejoin="round"/></svg>
<svg class="b" style="left:985.50px;top:777.00px;" width="10.4" height="32" viewBox="0 0 10.4 32"><circle cx="5.2" cy="4.2" r="4.2" fill="#fff"/><circle cx="5.2" cy="16" r="4.2" fill="#fff"/><circle cx="5.2" cy="27.8" r="4.2" fill="#fff"/></svg>
<div class="b" style="left:157px;top:829px;width:862px;height:700px;overflow:hidden;">
<div class="b" style="left:0.00px;top:0.00px;width:862.00px;height:60.00px;background:#0f1320;"></div>
<div class="b" style="left:0.00px;top:59.80px;width:862.00px;height:64.00px;background:#1c2132;"></div>
<div class="b" style="left:786.00px;top:71.00px;width:94.00px;height:42.00px;background:#fff;border:1.5px solid #cfd0d6;border-radius:6px;box-sizing:border-box;"></div>
<div class="b" style="left:787.00px;top:72.30px;width:7.00px;height:39.50px;background:#90c26c;border-radius:5px 0 0 5px;"></div>
<div class="b" style="left:786.00px;top:135.00px;width:94.00px;height:42.00px;background:#fff;border:1.5px solid #cfd0d6;border-radius:6px;box-sizing:border-box;"></div>
<div class="b" style="left:787.00px;top:136.30px;width:3.00px;height:39.50px;background:#90c26c;border-radius:5px 0 0 5px;"></div>
<div class="b" style="left:0.00px;top:187.80px;width:862.00px;height:64.00px;background:#1c2132;"></div>
<div class="b" style="left:786.00px;top:199.00px;width:94.00px;height:42.00px;background:#fff;border:1.5px solid #cfd0d6;border-radius:6px;box-sizing:border-box;"></div>
<div class="b" style="left:787.00px;top:200.30px;width:3.00px;height:39.50px;background:#90c26c;border-radius:5px 0 0 5px;"></div>
<div class="b" style="left:786.00px;top:263.00px;width:94.00px;height:42.00px;background:#fff;border:1.5px solid #cfd0d6;border-radius:6px;box-sizing:border-box;"></div>
<div class="b" style="left:787.00px;top:264.30px;width:3.00px;height:39.50px;background:#90c26c;border-radius:5px 0 0 5px;"></div>
<div class="b" style="left:0.00px;top:315.80px;width:862.00px;height:64.00px;background:#1c2132;"></div>
<div class="b" style="left:786.00px;top:327.00px;width:94.00px;height:42.00px;background:#fff;border:1.5px solid #cfd0d6;border-radius:6px;box-sizing:border-box;"></div>
<div class="b" style="left:787.00px;top:328.30px;width:3.00px;height:39.50px;background:#90c26c;border-radius:5px 0 0 5px;"></div>
<div class="b" style="left:786.00px;top:391.00px;width:94.00px;height:42.00px;background:#fff;border:1.5px solid #cfd0d6;border-radius:6px;box-sizing:border-box;"></div>
<div class="b" style="left:787.00px;top:392.30px;width:3.00px;height:39.50px;background:#90c26c;border-radius:5px 0 0 5px;"></div>
<div class="b" style="left:0.00px;top:443.80px;width:862.00px;height:64.00px;background:#1c2132;"></div>
<div class="b" style="left:786.00px;top:455.00px;width:94.00px;height:42.00px;background:#fff;border:1.5px solid #cfd0d6;border-radius:6px;box-sizing:border-box;"></div>
<div class="b" style="left:787.00px;top:456.30px;width:3.00px;height:39.50px;background:#90c26c;border-radius:5px 0 0 5px;"></div>
<div class="b" style="left:786.00px;top:519.00px;width:94.00px;height:42.00px;background:#fff;border:1.5px solid #cfd0d6;border-radius:6px;box-sizing:border-box;"></div>
<div class="b" style="left:787.00px;top:520.30px;width:3.00px;height:39.50px;background:#90c26c;border-radius:5px 0 0 5px;"></div>
<div class="b" style="left:0.00px;top:571.80px;width:862.00px;height:64.00px;background:#1c2132;"></div>
<div class="b" style="left:786.00px;top:583.00px;width:94.00px;height:42.00px;background:#fff;border:1.5px solid #cfd0d6;border-radius:6px;box-sizing:border-box;"></div>
<div class="b" style="left:787.00px;top:584.30px;width:3.00px;height:39.50px;background:#90c26c;border-radius:5px 0 0 5px;"></div>
<div class="b" style="left:786.00px;top:647.00px;width:94.00px;height:42.00px;background:#fff;border:1.5px solid #cfd0d6;border-radius:6px;box-sizing:border-box;"></div>
<div class="b" style="left:787.00px;top:648.30px;width:3.00px;height:39.50px;background:#90c26c;border-radius:5px 0 0 5px;"></div>
<div class="b" style="left:0.00px;top:699.80px;width:862.00px;height:64.00px;background:#1c2132;"></div>
<div class="b" style="left:786.00px;top:711.00px;width:94.00px;height:42.00px;background:#fff;border:1.5px solid #cfd0d6;border-radius:6px;box-sizing:border-box;"></div>
<div class="b" style="left:787.00px;top:712.30px;width:3.00px;height:39.50px;background:#90c26c;border-radius:5px 0 0 5px;"></div>
</div>
<div class="b" style="left:929.00px;top:829.00px;width:2.30px;height:695.00px;background:repeating-linear-gradient(to bottom,#fff 0 6.4px,transparent 6.4px 9.6px);"></div>
<div class="t" style="left:172.40px;top:848.42px;font-size:24.302px;color:#fff;transform:scaleX(1.1011);-webkit-text-stroke:0.85px #fff;">Name</div>
<div class="t" style="left:946.15px;top:847.92px;font-size:25.131px;color:#fff;transform:scaleX(1.0726);-webkit-text-stroke:0.85px #fff;">Numb</div>
<div class="t" style="left:168.25px;top:910.81px;font-size:26.086px;color:#fff;transform:scaleX(1.0503);-webkit-text-stroke:0.10px #fff;text-decoration:underline;text-decoration-thickness:2px;text-underline-offset:3px;">kube-dns-svc-kube-system-bc-gke-boutique01</div>
<div class="t" style="left:168.25px;top:974.81px;font-size:26.086px;color:#fff;transform:scaleX(1.0479);-webkit-text-stroke:0.10px #fff;text-decoration:underline;text-decoration-thickness:2px;text-underline-offset:3px;">currencyservice-svc-boutique-bc-gke-boutique01</div>
<div class="t" style="left:169.30px;top:1038.81px;font-size:26.086px;color:#fff;transform:scaleX(1.0606);-webkit-text-stroke:0.10px #fff;text-decoration:underline;text-decoration-thickness:2px;text-underline-offset:3px;">frontend-svc-boutique-bc-gke-boutique01</div>
<div class="t" style="left:168.24px;top:1102.81px;font-size:26.086px;color:#fff;transform:scaleX(1.0628);-webkit-text-stroke:0.10px #fff;text-decoration:underline;text-decoration-thickness:2px;text-underline-offset:3px;">lm-container-argus-svc-logicmonitor-bc-gke-boutique01</div>
<div class="t" style="left:168.24px;top:1166.81px;font-size:26.086px;color:#fff;transform:scaleX(1.0629);-webkit-text-stroke:0.10px #fff;text-decoration:underline;text-decoration-thickness:2px;text-underline-offset:3px;">default-http-backend-svc-kube-system-bc-gke-boutique01</div>
<div class="t" style="left:169.30px;top:1230.81px;font-size:26.086px;color:#fff;transform:scaleX(1.0482);-webkit-text-stroke:0.10px #fff;text-decoration:underline;text-decoration-thickness:2px;text-underline-offset:3px;">shippingservice-svc-boutique-bc-gke-boutique01</div>
<div class="t" style="left:168.25px;top:1294.81px;font-size:26.086px;color:#fff;transform:scaleX(1.0509);-webkit-text-stroke:0.10px #fff;text-decoration:underline;text-decoration-thickness:2px;text-underline-offset:3px;">recommendationservice-svc-boutique-bc-gke-boutique01</div>
<div class="t" style="left:168.23px;top:1358.81px;font-size:26.086px;color:#fff;transform:scaleX(1.0704);-webkit-text-stroke:0.10px #fff;text-decoration:underline;text-decoration-thickness:2px;text-underline-offset:3px;">lm-container-kube-state-metrics-svc-logicmonitor-bc-gke-b...</div>
<div class="t" style="left:168.25px;top:1422.81px;font-size:26.086px;color:#fff;transform:scaleX(1.0530);-webkit-text-stroke:0.10px #fff;text-decoration:underline;text-decoration-thickness:2px;text-underline-offset:3px;">emailservice-svc-boutique-bc-gke-boutique01</div>
<div class="t" style="left:168.24px;top:1486.81px;font-size:26.086px;color:#fff;transform:scaleX(1.0601);-webkit-text-stroke:0.10px #fff;text-decoration:underline;text-decoration-thickness:2px;text-underline-offset:3px;">lm-container-lm-container-collectorset-controller-svc-logicm...</div>
<div class="b" style="left:1057.00px;top:747.00px;width:1358.00px;height:537.00px;background:#fff;border-radius:8px;border:2px solid #1c2336;box-sizing:border-box;box-shadow:0 0 0 1px #d7d9de;"></div>
<div class="t" style="left:1075.00px;top:770.98px;font-size:27.892px;color:#161c2e;transform:scaleX(1.0094);-webkit-text-stroke:0.85px #161c2e;">Top Kubernetes Services by Pods (Trend)</div>
<svg class="b" style="left:2240.50px;top:779.50px;" width="32.8" height="24.6" viewBox="0 0 32.8 24.6"><g transform="scale(0.82)"><circle cx="5" cy="5" r="4.8" fill="#161b2e"/><circle cx="20" cy="5" r="4.8" fill="#161b2e"/><circle cx="35" cy="5" r="4.8" fill="#161b2e"/><polyline points="8,16 20,26 32,16" fill="none" stroke="#161b2e" stroke-width="4.4"/></g></svg>
<svg class="b" style="left:2297.00px;top:777.00px;" width="32.3" height="32.3" viewBox="0 0 32.3 32.3"><path d="M2 13.243 V2 H13.243 M19.057 2 H30.3 V13.243 M2 19.057 V30.3 H13.243 M19.057 30.3 H30.3 V19.057" fill="none" stroke="#161b2e" stroke-width="4" stroke-linejoin="round"/></svg>
<svg class="b" style="left:2363.80px;top:777.00px;" width="10.4" height="32" viewBox="0 0 10.4 32"><circle cx="5.2" cy="4.2" r="4.2" fill="#161b2e"/><circle cx="5.2" cy="16" r="4.2" fill="#161b2e"/><circle cx="5.2" cy="27.8" r="4.2" fill="#161b2e"/></svg>
<div class="t" style="left:1142.68px;top:866.70px;font-size:22.206px;color:#262b3c;transform:scaleX(1.1226);">20</div>
<div class="t" style="left:1142.75px;top:1018.23px;font-size:23.352px;color:#262b3c;transform:scaleX(1.0487);">10</div>
<div class="t" style="left:1158.00px;top:1169.48px;font-size:23.639px;color:#262b3c;transform:scaleX(0.9231);">0</div>
<div class="t" style="left:1085px;top:1028px;font-size:23px;color:#262b3c;transform:rotate(-90deg);transform-origin:50% 50%;width:60px;text-align:center;line-height:24px;">pods</div>
<div class="b" style="left:1201.00px;top:888.00px;width:1196.00px;height:1.00px;background:#e6e6e6;"></div>
<div class="b" style="left:1201.00px;top:903.50px;width:1196.00px;height:30.37px;background:#6a96f5;border-top:1.5px solid #3d7af0;box-sizing:border-box;"></div>
<div class="b" style="left:1201.00px;top:933.87px;width:1196.00px;height:15.18px;background:#a6c080;border-top:1.5px solid #8db060;box-sizing:border-box;"></div>
<div class="b" style="left:1201.00px;top:949.05px;width:1196.00px;height:15.18px;background:#bf5b57;border-top:1.5px solid #b03030;box-sizing:border-box;"></div>
<div class="b" style="left:1201.00px;top:964.24px;width:1196.00px;height:15.18px;background:#f4b46b;border-top:1.5px solid #e8a050;box-sizing:border-box;"></div>
<div class="b" style="left:1201.00px;top:979.42px;width:1196.00px;height:15.18px;background:#845a94;border-top:1.5px solid #704080;box-sizing:border-box;"></div>
<div class="b" style="left:1201.00px;top:994.61px;width:1196.00px;height:15.18px;background:#585e72;border-top:1.5px solid #30364a;box-sizing:border-box;"></div>
<div class="b" style="left:1201.00px;top:1009.79px;width:1196.00px;height:15.18px;background:#4659c2;border-top:1.5px solid #1c2e90;box-sizing:border-box;"></div>
<div class="b" style="left:1201.00px;top:1024.97px;width:1196.00px;height:15.18px;background:#7b9568;border-top:1.5px solid #5a7848;box-sizing:border-box;"></div>
<div class="b" style="left:1201.00px;top:1040.16px;width:1196.00px;height:15.18px;background:#9a4e4a;border-top:1.5px solid #700e0e;box-sizing:border-box;"></div>
<div class="b" style="left:1201.00px;top:1055.34px;width:1196.00px;height:15.18px;background:#f08a64;border-top:1.5px solid #e07040;box-sizing:border-box;"></div>
<div class="b" style="left:1201.00px;top:1070.53px;width:1196.00px;height:15.18px;background:#62426e;border-top:1.5px solid #3a1a50;box-sizing:border-box;"></div>
<div class="b" style="left:1201.00px;top:1085.71px;width:1196.00px;height:15.18px;background:#6a6e7e;border-top:1.5px solid #454a5e;box-sizing:border-box;"></div>
<div class="b" style="left:1201.00px;top:1100.89px;width:1196.00px;height:15.18px;background:#7aaaf5;border-top:1.5px solid #5a90f0;box-sizing:border-box;"></div>
<div class="b" style="left:1201.00px;top:1116.08px;width:1196.00px;height:15.18px;background:#c4d4a4;border-top:1.5px solid #a8c080;box-sizing:border-box;"></div>
<div class="b" style="left:1201.00px;top:1131.26px;width:1196.00px;height:15.18px;background:#e36a68;border-top:1.5px solid #d04040;box-sizing:border-box;"></div>
<div class="b" style="left:1201.00px;top:1146.45px;width:1196.00px;height:15.18px;background:#f8d878;border-top:1.5px solid #f0c040;box-sizing:border-box;"></div>
<div class="b" style="left:1201.00px;top:1161.63px;width:1196.00px;height:15.18px;background:#a083b0;border-top:1.5px solid #8a68a0;box-sizing:border-box;"></div>
<div class="b" style="left:1201.00px;top:1176.82px;width:1196.00px;height:15.18px;background:#e48a8a;border-top:1.5px solid #d06868;box-sizing:border-box;"></div>
<div class="b" style="left:1201.00px;top:1191.50px;width:1196.00px;height:1.50px;background:#5a8af0;"></div>
<div class="b" style="left:1201.00px;top:1193.00px;width:1196.00px;height:2.00px;background:#ccd6eb;"></div>
<div class="b" style="left:1388.50px;top:1195.00px;width:2.00px;height:16.00px;background:#ccd6eb;"></div>
<div class="t" style="left:1359.90px;top:1211.59px;font-size:22.923px;color:#262b3c;transform:scaleX(1.0975);">20:00</div>
<div class="b" style="left:1588.60px;top:1195.00px;width:2.00px;height:16.00px;background:#ccd6eb;"></div>
<div class="t" style="left:1559.02px;top:1211.59px;font-size:22.923px;color:#262b3c;transform:scaleX(0.9810);">1. Feb</div>
<div class="b" style="left:1786.70px;top:1195.00px;width:2.00px;height:16.00px;background:#ccd6eb;"></div>
<div class="t" style="left:1759.40px;top:1211.59px;font-size:22.923px;color:#262b3c;transform:scaleX(1.0710);">04:00</div>
<div class="b" style="left:1986.80px;top:1195.00px;width:2.00px;height:16.00px;background:#ccd6eb;"></div>
<div class="t" style="left:1958.70px;top:1211.59px;font-size:22.923px;color:#262b3c;transform:scaleX(1.0657);">08:00</div>
<div class="b" style="left:2184.90px;top:1195.00px;width:2.00px;height:16.00px;background:#ccd6eb;"></div>
<div class="t" style="left:2156.91px;top:1211.59px;font-size:22.923px;color:#262b3c;transform:scaleX(1.0903);">12:00</div>
<div class="b" style="left:2385.00px;top:1195.00px;width:2.00px;height:16.00px;background:#ccd6eb;"></div>
<div class="t" style="left:2334.72px;top:1211.59px;font-size:22.923px;color:#262b3c;transform:scaleX(1.0831);">16:00</div>
<div class="b" style="left:1075.00px;top:1265.00px;width:1322.00px;height:2.00px;background:#e0e0e0;"></div>
<div class="b" style="left:1057.00px;top:1305.60px;width:1127.00px;height:294.40px;background:#fff;border-radius:8px;border:2px solid #1c2336;box-sizing:border-box;box-shadow:0 0 0 1px #d7d9de;"></div>
<div class="t" style="left:1073.93px;top:1329.00px;font-size:27.754px;color:#161c2e;transform:scaleX(1.0342);-webkit-text-stroke:0.85px #161c2e;">Kubernetes Service Relative Pod Utilization</div>
<svg class="b" style="left:2067.00px;top:1334.60px;" width="32.2" height="32.2" viewBox="0 0 32.2 32.2"><path d="M2 13.202 V2 H13.202 M18.998 2 H30.2 V13.202 M2 18.998 V30.2 H13.202 M18.998 30.2 H30.2 V18.998" fill="none" stroke="#161b2e" stroke-width="4" stroke-linejoin="round"/></svg>
<svg class="b" style="left:2133.20px;top:1334.60px;" width="10.4" height="32.2" viewBox="0 0 10.4 32.2"><circle cx="5.2" cy="4.2" r="4.2" fill="#161b2e"/><circle cx="5.2" cy="16.1" r="4.2" fill="#161b2e"/><circle cx="5.2" cy="28" r="4.2" fill="#161b2e"/></svg>
<div class="t" style="left:1360.55px;top:1451.98px;font-size:24.828px;color:#0c1a5a;font-weight:bold;transform:scaleX(1.0492);">redis-cart-svc-</div>
<div class="t" style="left:1360.56px;top:1478.98px;font-size:24.828px;color:#0c1a5a;font-weight:bold;transform:scaleX(1.0421);">boutique-bc-gke-</div>
<div class="t" style="left:1360.64px;top:1505.98px;font-size:24.828px;color:#0c1a5a;font-weight:bold;transform:scaleX(0.9613);">boutique01: 5.00%</div>
<div class="t" style="left:1669.60px;top:1451.98px;font-size:24.828px;color:#0c1a5a;font-weight:bold;transform:scaleX(1.0198);">frontend-svc-</div>
<div class="t" style="left:1668.56px;top:1478.98px;font-size:24.828px;color:#0c1a5a;font-weight:bold;transform:scaleX(1.0421);">boutique-bc-gke-</div>
<div class="t" style="left:1668.64px;top:1505.98px;font-size:24.828px;color:#0c1a5a;font-weight:bold;transform:scaleX(0.9613);">boutique01: 5.00%</div>
<svg class="b" style="left:1560.00px;top:1450.00px;" width="120" height="74" viewBox="0 0 120 74"><path d="M32 8.5 Q48 22 52 74" fill="none" stroke="#e8c050" stroke-width="1.6"/><path d="M89 8.5 Q74 22 70 74" fill="none" stroke="#e88060" stroke-width="1.6"/><path d="M10 66 Q28 58 38 74" fill="none" stroke="#e8c050" stroke-width="1.6"/><path d="M110 64 Q98 58 88 74" fill="none" stroke="#7030a0" stroke-width="1.6"/><rect x="41" y="70" width="18" height="4" fill="#e8c868"/><rect x="59" y="70" width="18" height="4" fill="#e89070"/></svg>
<div class="b" style="left:2204.60px;top:1305.00px;width:668.40px;height:295.00px;background:#20273b;border-radius:8px;box-shadow:0 0 0 2px #d6d8dd;"></div>
<div class="t" style="left:2221.73px;top:1329.02px;font-size:27.616px;color:#fff;transform:scaleX(1.0350);-webkit-text-stroke:0.85px #fff;">Kubernetes Service Aggregate Pod...</div>
<svg class="b" style="left:2754.70px;top:1335.00px;" width="32.3" height="32.3" viewBox="0 0 32.3 32.3"><path d="M2 13.243 V2 H13.243 M19.057 2 H30.3 V13.243 M2 19.057 V30.3 H13.243 M19.057 30.3 H30.3 V19.057" fill="none" stroke="#fff" stroke-width="4" stroke-linejoin="round"/></svg>
<svg class="b" style="left:2822.00px;top:1335.00px;" width="10.4" height="31.6" viewBox="0 0 10.4 31.6"><circle cx="5.2" cy="4.2" r="4.2" fill="#fff"/><circle cx="5.2" cy="15.8" r="4.2" fill="#fff"/><circle cx="5.2" cy="27.4" r="4.2" fill="#fff"/></svg>
<svg class="b" style="left:2360.00px;top:1430.00px;" width="360" height="94" viewBox="0 0 360 94"><circle cx="178.5" cy="173.5" r="168" fill="none" stroke="#3a52b8" stroke-width="1.8"/><circle cx="178.5" cy="174" r="103" fill="none" stroke="#fff" stroke-width="2"/></svg>
<div class="b" style="left:119.00px;top:1464.00px;width:2766.00px;height:60.00px;background:linear-gradient(to bottom,rgba(0,0,0,0),rgba(0,0,0,0.055));pointer-events:none;"></div></body></html>
